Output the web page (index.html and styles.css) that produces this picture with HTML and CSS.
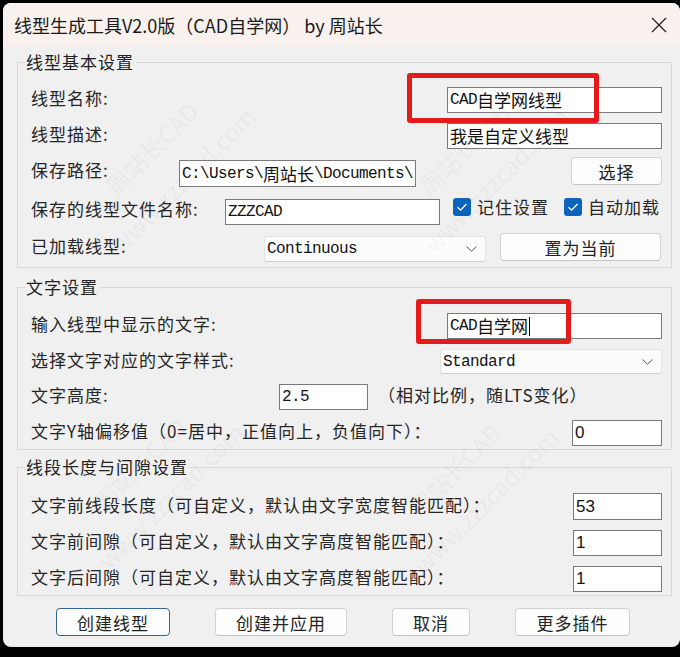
FILE: index.html
```html
<!DOCTYPE html>
<html lang="zh-CN">
<head>
<meta charset="utf-8">
<title>线型生成工具</title>
<link rel="stylesheet" href="styles.css">
</head>
<body>
<div class="window">
  <div class="titlebar">
    <span class="title">线型生成工具V2.0版（CAD自学网） by 周站长</span>
    <svg class="close" viewBox="0 0 16 16" width="16" height="16"><path d="M1 1 L15 15 M15 1 L1 15" stroke="#222" stroke-width="1.3" fill="none"/></svg>
  </div>
  <div class="content">
    <fieldset class="group g1">
      <legend>线型基本设置</legend>
      <div class="row h26">
        <span class="label">线型名称:</span>
        <div class="field w215 push h26">CAD<span class="cj">自学网线型</span></div>
      </div>
      <div class="row h26 mt10">
        <span class="label">线型描述:</span>
        <div class="field w215 push h26"><span class="cj">我是自定义线型</span></div>
      </div>
      <div class="row h30 mt8">
        <span class="label lw148">保存路径:</span>
        <div class="field w237 h27 end">C:\Users\<span class="cj">周站长</span>\Documents\</div>
        <div class="btn push w91 h28 start">选择</div>
      </div>
      <div class="row h28 mt10">
        <span class="label lw194">保存的线型文件名称:</span>
        <div class="field w215 h26 end">ZZZCAD</div>
        <div class="check ml13">
          <span class="box"><svg viewBox="0 0 18 18" width="18" height="18"><path d="M4.5 9.2 L7.6 12.2 L13.5 6" stroke="#fff" stroke-width="1.3" fill="none"/></svg></span>
          <span class="ctext">记住设置</span>
        </div>
        <div class="check ml15">
          <span class="box"><svg viewBox="0 0 18 18" width="18" height="18"><path d="M4.5 9.2 L7.6 12.2 L13.5 6" stroke="#fff" stroke-width="1.3" fill="none"/></svg></span>
          <span class="ctext">自动加载</span>
        </div>
      </div>
      <div class="row h29 mt8">
        <span class="label lw233">已加载线型:</span>
        <div class="select w222 h26 end">Continuous<svg class="chev" viewBox="0 0 11 6" width="11" height="6"><path d="M0.5 0.5 L5.5 5.2 L10.5 0.5" stroke="#555" stroke-width="1" fill="none"/></svg></div>
        <div class="btn w161 h28 ml14 start">置为当前</div>
      </div>
    </fieldset>

    <fieldset class="group g2">
      <legend>文字设置</legend>
      <div class="row h26">
        <span class="label">输入线型中显示的文字:</span>
        <div class="field w215 push h26">CAD<span class="cj">自学网</span><span class="caret"></span></div>
      </div>
      <div class="row h25 mt10">
        <span class="label">选择文字对应的文字样式:</span>
        <div class="select w222 push h25">Standard<svg class="chev" viewBox="0 0 11 6" width="11" height="6"><path d="M0.5 0.5 L5.5 5.2 L10.5 0.5" stroke="#555" stroke-width="1" fill="none"/></svg></div>
      </div>
      <div class="row h26 mt10">
        <span class="label lw248">文字高度:</span>
        <div class="field w89 h26">2.5</div>
        <span class="label ml10">（相对比例，随LTS变化）</span>
      </div>
      <div class="row h26 mt10">
        <span class="label">文字Y轴偏移值（0=居中，正值向上，负值向下）：</span>
        <div class="field num w90 push h26">0</div>
      </div>
    </fieldset>

    <fieldset class="group g3">
      <legend>线段长度与间隙设置</legend>
      <div class="row h27">
        <span class="label">文字前线段长度（可自定义，默认由文字宽度智能匹配）：</span>
        <div class="field num w89 push h27">53</div>
      </div>
      <div class="row h26 mt10">
        <span class="label">文字前间隙（可自定义，默认由文字高度智能匹配）：</span>
        <div class="field num w89 push h26">1</div>
      </div>
      <div class="row h26 mt10">
        <span class="label">文字后间隙（可自定义，默认由文字高度智能匹配）：</span>
        <div class="field num w89 push h26">1</div>
      </div>
    </fieldset>

    <div class="buttons">
      <div class="btn default w114 h28">创建线型</div>
      <div class="btn w132 h28">创建并应用</div>
      <div class="btn w78 h28">取消</div>
      <div class="btn w115 h28">更多插件</div>
    </div>
  </div>

  <div class="mark m1"><div>周站长CAD</div><div>www.zzzcad.com</div></div>
  <div class="mark m2"><div>周站长CAD</div><div>www.zzzcad.com</div></div>
  <div class="mark m3"><div>周站长CAD</div><div>www.zzzcad.com</div></div>
  <div class="mark m4"><div>周站长CAD</div><div>www.zzzcad.com</div></div>

  <div class="annot a1"></div>
  <div class="annot a2"></div>
</div>
</body>
</html>
```

FILE: styles.css
```css
html, body {
  margin: 0;
  padding: 0;
}
body {
  background: #000;
  width: 680px;
  height: 657px;
  overflow: hidden;
  font-family: "Noto Sans CJK SC", "Noto Sans", sans-serif;
  color: #222;
}
.window {
  position: relative;
  margin: 3px 0 0 3px;
  width: 677px;
  height: 644px;
  background: #f0f0f0;
  border-radius: 8px;
  overflow: hidden;
}
.titlebar {
  height: 43px;
  box-sizing: border-box;
  background: #f8f1ed;
  display: flex;
  align-items: center;
  justify-content: space-between;
  padding: 0 13px 0 11px;
}
.title {
  font-size: 18px;
  color: #1a1a1a;
  line-height: 24px;
}
.close {
  display: block;
  margin-top: 1px;
}
.content {
  padding: 6px 8px 0 14px;
}
.group {
  margin: 0;
  border: 1px solid #d8d8d8;
  padding: 15px 9px 5px 13px;
  min-width: 0;
}
.group legend {
  font-size: 17px;
  line-height: 20px;
  letter-spacing: 1px;
  padding: 0 2px 0 1px;
  margin-left: -6px;
  color: #222;
}
.g2 {
  margin-top: 9px;
  padding: 16px 9px 3px 13px;
}
.g3 {
  margin-top: 7px;
  padding: 16px 9px 3px 13px;
}
.row {
  display: flex;
  align-items: center;
}
.label {
  font-size: 17px;
  letter-spacing: 1px;
  color: #262626;
  white-space: nowrap;
  line-height: 22px;
  margin-top: -4px;
  flex: none;
}
.lw148 { width: 148px; }
.lw194 { width: 194px; }
.lw233 { width: 233px; }
.lw248 { width: 248px; }

.h25 { height: 25px; }
.h26 { height: 26px; }
.h27 { height: 27px; }
.h28 { height: 28px; }
.h29 { height: 29px; }
.h30 { height: 30px; }
.mt8 { margin-top: 8px; }
.mt10 { margin-top: 10px; }
.ml10 { margin-left: 10px; }
.ml13 { margin-left: 13px; }
.ml14 { margin-left: 14px; }
.ml15 { margin-left: 15px; }
.push { margin-left: auto; }
.start { align-self: flex-start; }
.end { align-self: flex-end; }

.w78 { width: 78px; }
.w89 { width: 89px; }
.w90 { width: 90px; }
.w91 { width: 91px; }
.w114 { width: 114px; }
.w115 { width: 115px; }
.w132 { width: 132px; }
.w161 { width: 161px; }
.w215 { width: 215px; }
.w222 { width: 222px; }
.w237 { width: 237px; }

.field {
  box-sizing: border-box;
  background: #fff;
  border: 1px solid #7a7a7a;
  font-family: "Liberation Mono", "Noto Sans CJK SC", monospace;
  font-size: 16px;
  letter-spacing: -0.6px;
  color: #111;
  padding-left: 2px;
  display: flex;
  align-items: center;
  white-space: nowrap;
  flex: none;
  overflow: hidden;
}
.field .cj {
  font-family: "Noto Sans CJK SC", sans-serif;
  font-size: 17px;
  letter-spacing: 0;
  line-height: 20px;
}
.field.num {
  font-family: "Liberation Sans", "Noto Sans", sans-serif;
  font-size: 17px;
  letter-spacing: 0;
}
.caret {
  display: inline-block;
  width: 1px;
  height: 19px;
  background: #000;
  margin-left: 1px;
}
.select {
  box-sizing: border-box;
  background: #fcfcfc;
  border: 1px solid #e2e2e2;
  border-bottom-color: #cfcfcf;
  border-radius: 3px;
  font-family: "Liberation Mono", monospace;
  font-size: 16px;
  letter-spacing: -0.6px;
  color: #111;
  padding: 0 8px 0 2px;
  display: flex;
  align-items: center;
  justify-content: space-between;
  flex: none;
}
.chev {
  display: block;
}
.btn {
  box-sizing: border-box;
  background: #fdfdfd;
  border: 1px solid #d3d3d3;
  border-bottom-color: #c4c4c4;
  border-radius: 4px;
  font-size: 17px;
  letter-spacing: 1px;
  color: #222;
  display: flex;
  align-items: center;
  justify-content: center;
  flex: none;
}
.btn.default {
  border: 1px solid #33658f;
}
.check {
  display: flex;
  align-items: center;
  align-self: flex-start;
  margin-top: -1px;
}
.box {
  width: 18px;
  height: 18px;
  border-radius: 3px;
  background: #0a64be;
  display: block;
  flex: none;
}
.box svg {
  display: block;
}
.ctext {
  font-size: 17px;
  letter-spacing: 1px;
  color: #262626;
  margin-left: 6px;
  line-height: 22px;
  white-space: nowrap;
}
.buttons {
  display: flex;
  gap: 45px;
  margin: 12px 0 0 39px;
}
.mark {
  position: absolute;
  width: 230px;
  transform: rotate(-45deg);
  color: rgba(0, 0, 0, 0.05);
  font-size: 24px;
  line-height: 44px;
  text-align: center;
  pointer-events: none;
  white-space: nowrap;
}
.m1 { left: 49px; top: 117px; }
.m2 { left: 362px; top: 117px; }
.m3 { left: 37px; top: 433px; }
.m4 { left: 352px; top: 438px; }
.annot {
  position: absolute;
  box-sizing: border-box;
  border: 5px solid #e31b1b;
  border-radius: 3px;
  pointer-events: none;
}
.a1 { left: 404px; top: 70px; width: 192px; height: 50px; }
.a2 { left: 413px; top: 296px; width: 155px; height: 45px; }
```
